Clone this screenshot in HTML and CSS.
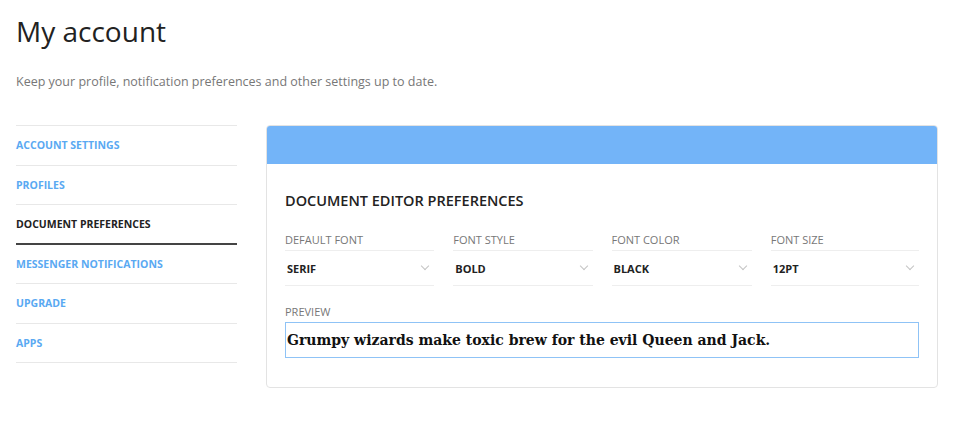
FILE: index.html
```html
<!DOCTYPE html>
<html lang="en">

<head>
    <meta charset="UTF-8">
    <meta name="viewport" content="width=device-width, initial-scale=1.0">
    <title>My account</title>
    <link rel="stylesheet" href="styles.css">
</head>

<body>
    <div class="page">
        <h1 class="title">My account</h1>
        <p class="subtitle">Keep your profile, notification preferences and other settings up to date.</p>

        <div class="layout">
            <ul class="side-nav">
                <li><a href="#">Account settings</a></li>
                <li><a href="#">Profiles</a></li>
                <li class="active"><a href="#">Document preferences</a></li>
                <li><a href="#">Messenger notifications</a></li>
                <li><a href="#">Upgrade</a></li>
                <li><a href="#">Apps</a></li>
            </ul>

            <div class="card">
                <div class="card-header"></div>
                <div class="card-body">
                    <h2>Document editor preferences</h2>

                    <div class="fields">
                        <div class="field">
                            <label>Default font</label>
                            <div class="select">Serif <span class="chevron"></span></div>
                        </div>
                        <div class="field">
                            <label>Font style</label>
                            <div class="select">Bold <span class="chevron"></span></div>
                        </div>
                        <div class="field">
                            <label>Font color</label>
                            <div class="select">Black <span class="chevron"></span></div>
                        </div>
                        <div class="field">
                            <label>Font size</label>
                            <div class="select">12pt <span class="chevron"></span></div>
                        </div>
                    </div>

                    <label class="preview-label">Preview</label>
                    <div class="preview">Grumpy wizards make toxic brew for the evil Queen and Jack.</div>
                </div>
            </div>
        </div>
    </div>
</body>

</html>
```

FILE: styles.css
```css
body {
    margin: 0;
    font-family: "Open Sans", Arial, sans-serif;
    color: #222;
    background: #fff;
}

.page {
    padding: 12px 22px 0 16px;
}

.title {
    margin: 0;
    font-size: 28px;
    font-weight: 400;
    line-height: 38px;
    color: #222;
}

.subtitle {
    margin: 23px 0 0;
    font-size: 12.5px;
    line-height: 18px;
    color: #777;
}

.layout {
    display: flex;
    align-items: flex-start;
    gap: 29px;
    margin-top: 34px;
}

.side-nav {
    list-style: none;
    margin: 0;
    padding: 0;
    width: 221px;
    border-top: 1px solid #e8e8e8;
}

.side-nav li {
    padding: 12px 0;
    font-size: 10.5px;
    line-height: 14.5px;
    border-bottom: 1px solid #e8e8e8;
}

.side-nav a {
    font-weight: 700;
    text-transform: uppercase;
    text-decoration: none;
    color: #5aa9f2;
}

.side-nav li.active {
    padding-bottom: 11px;
    border-bottom: 2px solid #444;
}

.side-nav li.active a {
    color: #222;
}

.card {
    flex: 1;
    border: 1px solid #e3e3e3;
    border-radius: 4px;
    overflow: hidden;
}

.card-header {
    height: 38px;
    background: #73b4f8;
}

.card-body {
    padding: 27px 18px 29px;
}

.card-body h2 {
    margin: 0;
    font-size: 14.5px;
    font-weight: 600;
    line-height: 20px;
    text-transform: uppercase;
    color: #222;
}

.fields {
    display: grid;
    grid-template-columns: 149fr 139fr 140fr 148fr;
    gap: 19px;
    margin-top: 21px;
}

.field label,
.preview-label {
    display: block;
    font-size: 11px;
    line-height: 16px;
    text-transform: uppercase;
    color: #777;
}

.select {
    display: flex;
    justify-content: space-between;
    align-items: center;
    margin-top: 2px;
    height: 34px;
    padding-left: 2px;
    border-top: 1px solid #eee;
    border-bottom: 1px solid #eee;
    font-size: 11px;
    font-weight: 700;
    text-transform: uppercase;
    color: #222;
}

.chevron {
    width: 5px;
    height: 5px;
    margin: 0 6px 4px 0;
    border-right: 1px solid #c4c4c4;
    border-bottom: 1px solid #c4c4c4;
    transform: rotate(45deg);
}

.preview-label {
    margin-top: 18px;
}

.preview {
    margin-top: 2px;
    height: 34px;
    display: flex;
    align-items: center;
    padding: 0 1px;
    border: 1px solid #8fc3f6;
    font-family: "DejaVu Serif", "Liberation Serif", serif;
    font-size: 14px;
    font-weight: 700;
    color: #111;
}
```
